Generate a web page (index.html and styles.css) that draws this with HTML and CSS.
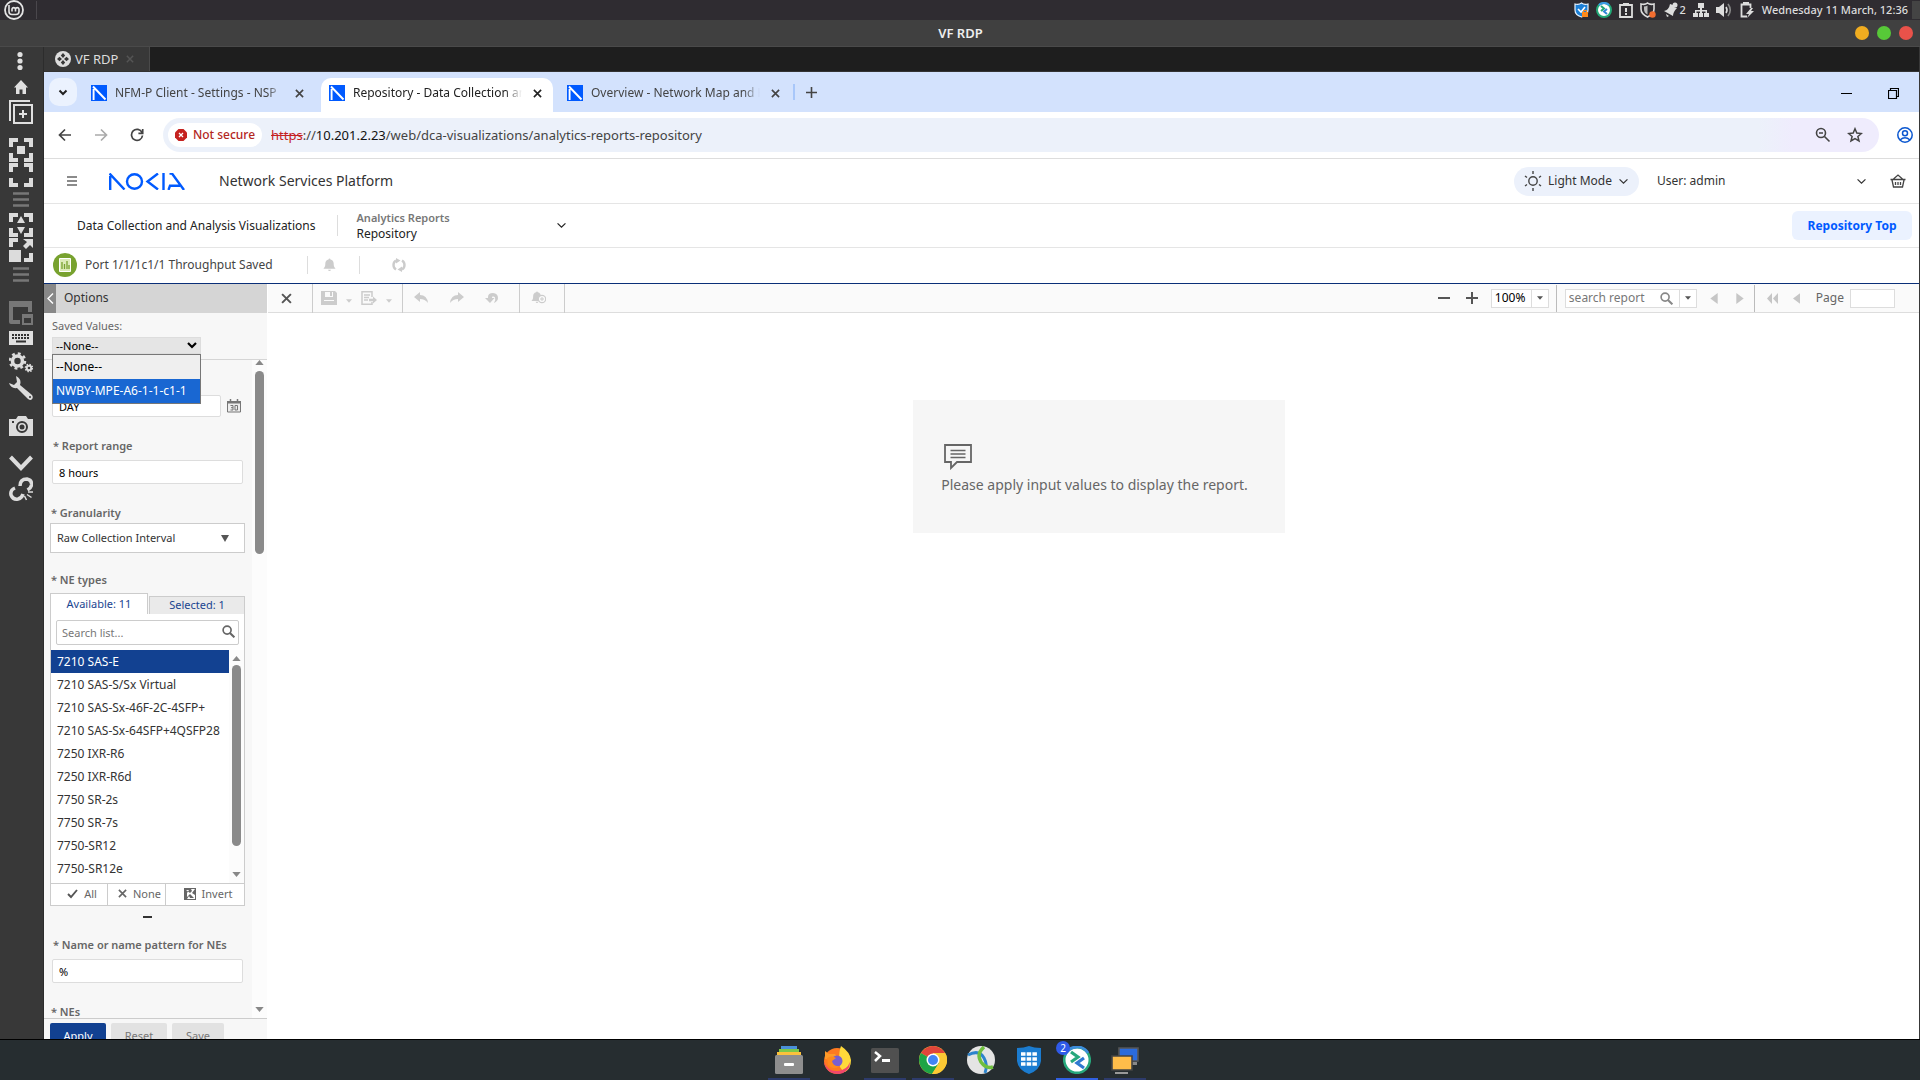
FILE: index.html
```html
<!DOCTYPE html>
<html lang="en">
<head>
<meta charset="utf-8">
<title>VF RDP</title>
<link rel="stylesheet" href="styles.css">
</head>
<body>
<svg class="defs" aria-hidden="true">
  <symbol id="i-close" viewBox="0 0 10 10"><path d="M1 1l8 8M9 1l-8 8" fill="none" stroke="currentColor" stroke-width="1.8"/></symbol>
  <symbol id="i-chev" viewBox="0 0 12 8"><path d="M1.500 1.500l4.500 4.500 4.500-4.500" fill="none" stroke="currentColor" stroke-width="1.400"/></symbol>
  <symbol id="i-tri" viewBox="0 0 10 6"><path d="M0 0h10L5 6z" fill="currentColor"/></symbol>
  <symbol id="i-left" viewBox="0 0 8 12"><path d="M8 0v12L0 6z" fill="currentColor"/></symbol>
  <symbol id="i-search" viewBox="0 0 14 14"><circle cx="5.500" cy="5.500" r="4.300" fill="none" stroke="currentColor" stroke-width="1.800"/><path d="M8.600 8.600l4.700 4.700" stroke="currentColor" stroke-width="2.200"/></symbol>
  <symbol id="i-fav" viewBox="0 0 16 16"><path d="M0 0h16v16H0z" fill="#005aff"/><path d="M2.600 15V4M2 1.500L14.500 14.500" fill="none" stroke="#fff" stroke-width="1.900"/></symbol>
  <symbol id="i-bell" viewBox="0 0 14 14"><path d="M7 0a1 1 0 0 1 1 1c2.500.5 3.500 2.300 3.500 4.500 0 3 .5 4 2 5.500H.5c1.500-1.500 2-2.500 2-5.500C2.500 3.300 3.500 1.500 6 1a1 1 0 0 1 1-1zM5.500 12h3a1.500 1.500 0 0 1-3 0z" fill="currentColor"/></symbol>
  <symbol id="i-lines" viewBox="0 0 24 24"><path d="M4 5.500h16M4 11.500h16M4 17.500h16" stroke="#777" stroke-width="2.500"/></symbol>
  <symbol id="i-corners" viewBox="0 0 24 24"><path d="M2 9V2h7M15 2h7v7M22 15v7h-7M9 22H2v-7" fill="none" stroke="#dcdcdc" stroke-width="4"/></symbol>
</svg>

<header class="panel">
  <button class="mint" aria-label="Menu"><svg width="20" height="20" viewBox="0 0 20 20"><circle cx="10" cy="10" r="9" fill="none" stroke="#e4e4e4" stroke-width="1.800"/><path d="M5 5v6.500a3 3 0 0 0 3 3h4a3 3 0 0 0 3-3V9a1.800 1.800 0 0 0-3.500 0v2.500M11.500 9A1.800 1.800 0 0 0 8 9v2.500" fill="none" stroke="#e4e4e4" stroke-width="1.600"/></svg></button>
  <div class="tray">
    <svg width="15" height="16" viewBox="0 0 15 16"><path d="M1 2q4 1 6.500-1Q10 3 14 2v6q0 5-6.500 7Q1 13 1 8z" fill="#1c7fd6" stroke="#e8f3ff" stroke-width="1.200"/><path d="M4 7l3 3 4-5" fill="none" stroke="#fff" stroke-width="1.600"/><path d="M8 10h6v5H8z" fill="#ff8a1c"/><path d="M9.500 10V8.500h3V10" fill="none" stroke="#ff8a1c"/></svg>
    <svg width="16" height="16" viewBox="0 0 16 16"><circle cx="8" cy="8" r="7" fill="#fff" stroke="#22a877" stroke-width="2"/><path d="M3 3a7 7 0 0 1 10 0" fill="none" stroke="#3c9be6" stroke-width="2"/><path d="M5 4l3 2.500L5 9" fill="none" stroke="#22a877" stroke-width="2"/><path d="M11 7L8 9.500l3 2.500" fill="none" stroke="#2f86d6" stroke-width="2"/></svg>
    <svg width="14" height="16" viewBox="0 0 14 16"><path d="M1 3h12v12H1z" fill="none" stroke="#ddd" stroke-width="1.800"/><path d="M4 1h6v3H4zM6 6h2v4H6zM6 11h2v2H6z" fill="#ddd"/></svg>
    <svg width="16" height="16" viewBox="0 0 16 16"><path d="M1 2q4 1 6.500-1Q10 3 14 2v5q0 5-6.500 8Q1 12 1 7z" fill="none" stroke="#ddd" stroke-width="1.600"/><path d="M4 4.500q2 0 3.500-1v9Q4 11 4 7z" fill="#bbb"/><circle cx="12.500" cy="12.500" r="3.200" fill="#f36d30"/></svg>
    <span class="notif"><svg width="15" height="16" viewBox="0 0 15 16"><path d="M1 9q5-1 6-7l3 1q1 3 4 3-4 4-4 8L1 9z" fill="#ddd"/><circle cx="12" cy="3" r="2.500" fill="#ddd"/><path d="M3 12l3 2-2 1z" fill="#ddd"/></svg>2</span>
    <svg width="16" height="16" viewBox="0 0 16 16"><path d="M5 1h6v5H5zM0 11h5v4H0zM6 11h4v4H6zM11 11h5v4h-5zM7 6h2v6H7zM2 8h12v1.500H2zM2 8h1.500v4H2zM12.500 8H14v4h-1.500z" fill="#ddd"/></svg>
    <svg width="16" height="16" viewBox="0 0 16 16"><path d="M0 5h3l5-4v14l-5-4H0z" fill="#ddd"/><path d="M10 5q2 3 0 6" fill="none" stroke="#ddd" stroke-width="1.600"/><path d="M12 2q4.500 6 0 12" fill="none" stroke="#888" stroke-width="1.600"/></svg>
    <svg width="16" height="16" viewBox="0 0 16 16"><path d="M8 14.500H2.500v-12h9V6" fill="none" stroke="#ddd" stroke-width="1.800"/><path d="M4 0h6v3H4zM12 6l-5 6h3l-2 4 7-7h-3l2-3z" fill="#ddd"/></svg>
    <time>Wednesday 11 March, 12:36</time>
  </div>
  <span class="corner"></span>
</header>

<div class="titlebar">
  <h1>VF RDP</h1>
  <div class="lights"><button class="min" aria-label="Minimize"></button><button class="max" aria-label="Maximize"></button><button class="cls" aria-label="Close"></button></div>
</div>

<div class="window">
  <nav class="tools" aria-label="Connection tools">
    <button aria-label="More"><svg viewBox="0 0 24 24"><g fill="#e0e0e0"><circle cx="11" cy="4.500" r="2.600"/><circle cx="11" cy="11" r="2.600"/><circle cx="11" cy="17.500" r="2.600"/></g></svg></button>
    <button aria-label="Home"><svg viewBox="0 0 24 24"><path d="M12 5l7 7.500h-2V19h-3.500v-4.500h-3V19H7v-6.500H5z" fill="#e0e0e0"/></svg></button>
    <button aria-label="New connection"><svg viewBox="0 0 24 24"><path d="M1 21V1h20M5 5h18v18H5zM14 10v8M10 14h8" fill="none" stroke="#e0e0e0" stroke-width="2"/></svg></button>
    <button class="gap" aria-label="Fit window"><svg viewBox="0 0 24 24"><use href="#i-corners"/><path d="M8 8h8v8H8z" fill="#dcdcdc"/></svg></button>
    <button aria-label="Fullscreen"><svg viewBox="0 0 24 24"><use href="#i-corners"/></svg></button>
    <button aria-label="Fullscreen options"><svg viewBox="0 0 24 24"><use href="#i-lines"/></svg></button>
    <button aria-label="Dynamic resolution"><svg viewBox="0 0 24 24"><use href="#i-corners"/><path d="M12 3l4 7H8zM12 21l4-7H8z" fill="#dcdcdc"/></svg></button>
    <button aria-label="Scaled mode"><svg viewBox="0 0 24 24"><path d="M2 9V2h7M22 15v7h-7" fill="none" stroke="#dcdcdc" stroke-width="4"/><path d="M0 12h12v12H0zM14 1h10v9l-3-3-4 4-3-3 4-4z" fill="#dcdcdc"/></svg></button>
    <button aria-label="Scale options"><svg viewBox="0 0 24 24"><use href="#i-lines"/></svg></button>
    <button class="gap" aria-label="Multi monitor"><svg viewBox="0 0 24 24"><path d="M0 0h23v11h-4V6H4v13h7v4H2q-2 0-2-2zM13 13h11v11H13zm2 4v5h7v-5z" fill="#777" fill-rule="evenodd"/></svg></button>
    <button aria-label="Grab keyboard"><svg viewBox="0 0 24 24"><path d="M0 5h24v14H0z" fill="#e0e0e0"/><path d="M3 9h18M3 12h18" stroke="#333" stroke-width="2" stroke-dasharray="2 1"/><path d="M7 15.500h10" stroke="#333" stroke-width="2"/></svg></button>
    <button aria-label="Preferences"><svg viewBox="0 0 24 24"><g fill="none" stroke="#dcdcdc"><circle cx="8.500" cy="10" r="5" stroke-width="3.600"/><circle cx="8.500" cy="10" r="7.500" stroke-width="2.500" stroke-dasharray="2.900 3"/><circle cx="20" cy="17" r="2.300" stroke-width="2"/><circle cx="20" cy="17" r="3.700" stroke-width="1.300" stroke-dasharray="1.500 1.400"/></g></svg></button>
    <button aria-label="Tools"><svg viewBox="0 0 24 24"><path d="M7 0q6 3 4 9l12 10q2 3-1 5-2 0-3-1L8 12Q2 13 0 7l5 2 3-3-1-6z" fill="#dcdcdc"/><circle cx="21" cy="21" r="1" fill="#333"/></svg></button>
    <button class="gap" aria-label="Screenshot"><svg viewBox="0 0 24 24"><path d="M0 5h7l2-3h8l2 3h5v17H0z" fill="#dcdcdc"/><circle cx="13" cy="13" r="5" fill="#dcdcdc" stroke="#383838" stroke-width="2"/><circle cx="13" cy="13" r="2.500" fill="#383838"/><path d="M3 7h2v2H3zM2 2h3v1H2z" fill="#383838"/></svg></button>
    <button class="gap" aria-label="Minimize window"><svg viewBox="0 0 24 24"><path d="M1.500 5L12 16 22.500 5" fill="none" stroke="#dcdcdc" stroke-width="4"/></svg></button>
    <button aria-label="Disconnect"><svg viewBox="0 0 24 24"><g fill="none" stroke="#dcdcdc" stroke-width="3.500"><path d="M11 9q0-7 7-7 5 1 4.500 6-.5 3-4 5"/><path d="M6 11q-5 2-4 7 2 5 7 4 4-1 5-5"/></g><path d="M15.500 19l2 4M18 17.500l4.500 3M19 15h5" stroke="#dcdcdc" stroke-width="1.500"/></svg></button>
  </nav>

  <div class="session">
    <div class="rtabs"><div class="rtab"><svg width="16" height="16" viewBox="0 0 16 16"><circle cx="8" cy="8" r="8" fill="#ddd"/><g fill="#383838"><path d="M8 2l2.200 2.500L8 7 5.800 4.500zM8 9l2.200 2.500L8 14l-2.200-2.500zM2 8l2.500-2.200L7 8l-2.500 2.200zM9 8l2.500-2.200L14 8l-2.500 2.200z"/></g></svg><span>VF RDP</span><svg class="rx" width="8" height="8"><use href="#i-close"/></svg></div></div>

    <div class="ctabs">
      <button class="tabsearch" aria-label="Search tabs"><svg width="10" height="7" viewBox="0 0 10 7"><path d="M1.500 1.500L5 5l3.500-3.500" fill="none" stroke="#222" stroke-width="2"/></svg></button>
      <div class="ctab"><svg width="16" height="16"><use href="#i-fav"/></svg><span>NFM-P Client - Settings - NSP</span><button aria-label="Close tab"><svg width="9" height="9"><use href="#i-close"/></svg></button></div>
      <div class="ctab on"><svg width="16" height="16"><use href="#i-fav"/></svg><span>Repository - Data Collection and Analysis</span><button aria-label="Close tab"><svg width="9" height="9"><use href="#i-close"/></svg></button></div>
      <div class="ctab"><svg width="16" height="16"><use href="#i-fav"/></svg><span>Overview - Network Map and Health</span><button aria-label="Close tab"><svg width="9" height="9"><use href="#i-close"/></svg></button></div>
      <button class="newtab" aria-label="New tab"><svg width="11" height="11" viewBox="0 0 11 11"><path d="M5.500 0v11M0 5.500h11" stroke="#444" stroke-width="1.600"/></svg></button>
      <div class="wctl"><svg width="11" height="11" viewBox="0 0 11 11"><path d="M0 5.500h11" stroke="#000"/></svg><svg width="11" height="11" viewBox="0 0 11 11"><path d="M.5 2.500h8v8h-8zM2.500 2.500v-2h8v8h-2" fill="none" stroke="#000" stroke-width="1.200"/></svg></div>
    </div>

    <div class="cbar">
      <button aria-label="Back"><svg width="14" height="14" viewBox="0 0 14 14"><path d="M13 7H2M7 1.500L1.500 7 7 12.500" fill="none" stroke="#444" stroke-width="1.700"/></svg></button>
      <button aria-label="Forward"><svg width="14" height="14" viewBox="0 0 14 14"><path d="M1 7h11M7 1.500L12.500 7 7 12.500" fill="none" stroke="#aaa" stroke-width="1.700"/></svg></button>
      <button aria-label="Reload"><svg width="14" height="14" viewBox="0 0 14 14"><path d="M12 4.500A5.500 5.500 0 1 0 12.500 7.500M12.700 1v4.300H8.400" fill="none" stroke="#444" stroke-width="1.700"/></svg></button>
      <div class="omni">
        <button class="chip"><svg width="12" height="12" viewBox="0 0 12 12"><path d="M3.500 0h5L12 3.500v5L8.500 12h-5L0 8.500v-5z" fill="#c5221f"/><path d="M4 4l4 4M8 4L4 8" stroke="#fff" stroke-width="1.300"/></svg>Not secure</button>
        <div class="url"><s>https</s>://<b>10.201.2.23</b>/web/dca-visualizations/analytics-reports-repository</div>
        <svg width="16" height="16" viewBox="0 0 16 16"><g fill="none" stroke="#444" stroke-width="1.600"><circle cx="6" cy="6" r="4.500"/><path d="M9.500 9.500l5 5M4 6h4"/></g></svg>
        <svg width="16" height="16" viewBox="0 0 16 16"><path d="M8 1.800l1.800 4.300 4.600.4-3.500 3 1.100 4.500L8 11.600 4 14l1.100-4.500-3.500-3 4.600-.4z" fill="none" stroke="#444" stroke-width="1.500"/></svg>
      </div>
      <button class="prof" aria-label="Profile"><svg width="16" height="16" viewBox="0 0 16 16"><g fill="none" stroke="#0b57d0" stroke-width="1.500"><circle cx="8" cy="8" r="7.200"/><circle cx="8" cy="6.300" r="2.500"/><path d="M3 13q5-4.500 10 0"/></g></svg></button>
    </div>

    <header class="nsp">
      <button aria-label="Menu" class="burger"><svg width="10" height="10" viewBox="0 0 10 10"><path d="M0 1h10M0 5h10M0 9h10" stroke="#666" stroke-width="1.400"/></svg></button>
      <svg class="logo" role="img" aria-label="Nokia" width="76" height="17" viewBox="0 0 76 17"><g fill="none" stroke="#005aff" stroke-width="2.400"><path d="M1.200 17V3M.5.5L15.500 16.500"/><ellipse cx="25.500" cy="8.500" rx="7.500" ry="7.300"/><path d="M49 .5L38.500 8.500 49 16.500M54.500 0v17M60.500.5H63L75 17M59.500 17l1.500-4.300h10"/></g></svg>
      <span class="prod">Network Services Platform</span>
      <button class="mode"><svg width="18" height="20" viewBox="0 0 18 20"><circle cx="9" cy="10" r="4.200" fill="none" stroke="#444" stroke-width="1.400"/><path d="M9 0v3M9 17v3M1 5l2 1.500M17 5l-2 1.500M1 15l2-1.500M17 15l-2-1.500" stroke="#444" stroke-width="1.400"/></svg><span>Light Mode</span><svg width="11" height="7"><use href="#i-chev"/></svg></button>
      <button class="user"><span>User: admin</span><svg width="11" height="7"><use href="#i-chev"/></svg></button>
      <button aria-label="Basket" class="basket"><svg width="16" height="16" viewBox="0 0 16 16"><path d="M.5 6.500h15M2 7l1.500 7h9L14 7M3.500 6L8 2l4.500 4M5.500 9v3M8 9v3M10.500 9v3" fill="none" stroke="#444" stroke-width="1.300"/></svg></button>
    </header>

    <div class="crumbs">
      <span class="app">Data Collection and Analysis Visualizations</span>
      <button class="view"><span><small>Analytics Reports</small>Repository</span><svg width="11" height="7"><use href="#i-chev"/></svg></button>
      <button class="top">Repository Top</button>
    </div>

    <div class="report">
      <svg width="24" height="24" viewBox="0 0 24 24"><circle cx="12" cy="12" r="12" fill="#78a22f"/><path d="M6.500 5.500h11v13h-11z" fill="#dcebb8" stroke="#fff"/><path d="M9 16V9M11.500 16v-5M14 16V8M16 16v-4" stroke="#78a22f" stroke-width="1.300"/></svg>
      <span>Port 1/1/1c1/1 Throughput Saved</span>
      <button class="rb" aria-label="Alerts"><svg width="13" height="14"><use href="#i-bell"/></svg></button>
      <button class="rf" aria-label="Refresh"><svg width="14" height="14" viewBox="0 0 14 14"><path d="M4 11.500A5.300 5.300 0 0 1 4 2.500M10 2.500a5.300 5.300 0 0 1 0 9" fill="none" stroke="#ccc" stroke-width="2.400"/><path d="M4 0l4.500 2.500L4 5.500zM10 14l-4.500-2.500L10 8.500z" fill="#ccc"/></svg></button>
    </div>

    <div class="body">
      <aside class="options">
        <div class="ohead"><button aria-label="Collapse"><svg width="7" height="11" viewBox="0 0 7 11"><path d="M6 .5l-5 5 5 5" fill="none" stroke="#fff" stroke-width="1.400"/></svg></button><h2>Options</h2></div>
        <div class="saved">
          <label for="sv">Saved Values:</label>
          <div class="pick"><select id="sv"><option>--None--</option></select><svg width="10" height="7" viewBox="0 0 10 7"><path d="M1 1l4 4 4-4" fill="none" stroke="#000" stroke-width="2.200"/></svg></div>
          <ul class="menu" role="listbox"><li role="option">--None--</li><li role="option" class="hot" aria-selected="true">NWBY-MPE-A6-1-1-c1-1</li></ul>
        </div>
        <div class="scroll">
          <form class="form">
            <div class="field in"><label for="f1">*</label><div class="date"><input id="f1" value="DAY" aria-label="Date"><svg width="14" height="14" viewBox="0 0 14 14"><path d="M.5 2.500h13v10.500H.5z" fill="#eee" stroke="#777"/><path d="M0 2h14v2.500H0z" fill="#777"/><path d="M3.500 0v3M10.500 0v3" stroke="#777" stroke-width="1.500"/><path d="M3.500 6.500h2.500v4.500H3.500M4 8.700h2M8 6.500h2.500V11H8z" fill="none" stroke="#777"/></svg></div></div>
            <div class="field in"><label for="f2">* Report range</label><input id="f2" class="tall" value="8 hours"></div>
            <div class="field"><label for="f3">* Granularity</label><div class="pick big"><select id="f3"><option>Raw Collection Interval</option></select><svg width="8" height="7" viewBox="0 0 10 6" preserveAspectRatio="none"><use href="#i-tri"/></svg></div></div>
            <div class="field multi"><label for="f4">* NE types</label>
              <div class="mtabs"><button type="button" class="on">Available: 11</button><button type="button">Selected: 1</button></div>
              <div class="mbox">
                <div class="find"><input id="f4" placeholder="Search list..."><svg width="13" height="13"><use href="#i-search"/></svg></div>
                <div class="lwrap">
                  <ul class="list" role="listbox"><li role="option" class="hot" aria-selected="true">7210 SAS-E</li><li role="option">7210 SAS-S/Sx Virtual</li><li role="option">7210 SAS-Sx-46F-2C-4SFP+</li><li role="option">7210 SAS-Sx-64SFP+4QSFP28</li><li role="option">7250 IXR-R6</li><li role="option">7250 IXR-R6d</li><li role="option">7750 SR-2s</li><li role="option">7750 SR-7s</li><li role="option">7750-SR12</li><li role="option">7750-SR12e</li></ul>
                  <div class="bar inner"><svg class="up" width="9" height="5"><use href="#i-tri"/></svg><div class="track"><i></i></div><svg width="9" height="5"><use href="#i-tri"/></svg></div>
                </div>
                <div class="acts"><button type="button"><svg width="11" height="10" viewBox="0 0 11 10"><path d="M1 5l3 3 6-7" fill="none" stroke="#555" stroke-width="1.900"/></svg>All</button><button type="button"><svg width="9" height="9"><use href="#i-close"/></svg>None</button><button type="button"><svg width="12" height="12" viewBox="0 0 12 12"><path d="M0 0h12v12H0z" fill="#666"/><path d="M2 2h3l-2 3v4l3-3 4 4H6l-1-2-2 3h8V7L8 5l3-4v-0H7l1 2-2 2z" fill="#fff"/></svg>Invert</button></div>
              </div>
              <div class="grip"></div>
            </div>
            <div class="field in"><label for="f5">* Name or name pattern for NEs</label><input id="f5" class="tall" value="%"></div>
            <div class="field"><label>* NEs</label></div>
          </form>
          <div class="bar outer"><svg class="up" width="9" height="5"><use href="#i-tri"/></svg><div class="track"><i></i></div><svg width="9" height="5"><use href="#i-tri"/></svg></div>
        </div>
        <div class="obtns"><button class="pri">Apply</button><button>Reset</button><button>Save</button></div>
      </aside>

      <main class="viewer">
        <div class="vbar">
          <div class="g g1"><button aria-label="Close"><svg width="11" height="11"><use href="#i-close"/></svg></button></div>
          <div class="g g2">
            <button aria-label="Save"><svg width="16" height="14" viewBox="0 0 16 14"><path d="M0 0h14l2 2v12H0zM4 1v5h8V1zM3 9v1h10V9z" fill="currentColor" fill-rule="evenodd"/><path d="M9 1h2v4H9z" fill="currentColor"/></svg></button><svg class="car" width="6" height="4"><use href="#i-tri"/></svg>
            <button aria-label="Export"><svg width="16" height="14" viewBox="0 0 16 14"><path d="M11 6V.8H1v12.400h10V11M3 4h6M3 6.500h5M3 9h4" fill="none" stroke="currentColor" stroke-width="1.500"/><path d="M8 7.800h4V5.500L16 9l-4 3.500v-2.300H8z" fill="currentColor"/></svg></button><svg class="car" width="6" height="4"><use href="#i-tri"/></svg>
          </div>
          <div class="g g3">
            <button aria-label="Undo"><svg width="14" height="12" viewBox="0 0 14 12"><path d="M0 5l6-5v3q7 0 8 8-3-4-8-4v3z" fill="currentColor"/></svg></button>
            <button aria-label="Redo"><svg width="14" height="12" viewBox="0 0 14 12"><path d="M14 5L8 0v3Q1 3 0 11q3-4 8-4v3z" fill="currentColor"/></svg></button>
            <button aria-label="Undo all"><svg width="14" height="12" viewBox="0 0 14 12"><path d="M3 6V5q0-4 5-4 5 .5 5 5 0 3-4 5 2-3 1-5.500Q9 4 7.500 4.500 7 5 7 6h2.500L5 11 0 6z" fill="currentColor"/></svg></button>
          </div>
          <div class="g g4"><button aria-label="Add alert"><svg width="15" height="14" viewBox="0 0 15 14"><use href="#i-bell" width="12" height="13"/><circle cx="11" cy="8" r="3.700" fill="#fafafa" stroke="currentColor" stroke-width="1.200"/><path d="M11 6v4M9 8h4" stroke="currentColor"/></svg></button></div>
          <div class="zoom">
            <button aria-label="Zoom out"><svg width="12" height="12" viewBox="0 0 12 12"><path d="M0 6h12" stroke="#555" stroke-width="2"/></svg></button>
            <button aria-label="Zoom in"><svg width="12" height="12" viewBox="0 0 12 12"><path d="M0 6h12M6 0v12" stroke="#555" stroke-width="2"/></svg></button>
            <div class="combo zc"><input value="100%" aria-label="Zoom"><button aria-label="Zoom levels"><svg width="6" height="4"><use href="#i-tri"/></svg></button></div>
          </div>
          <div class="srch">
            <div class="combo sc"><input placeholder="search report" aria-label="Search report"><svg width="13" height="13"><use href="#i-search"/></svg><button aria-label="Search options"><svg width="6" height="4"><use href="#i-tri"/></svg></button></div>
            <button aria-label="Previous match"><svg width="8" height="11"><use href="#i-left"/></svg></button>
            <button aria-label="Next match" class="flip"><svg width="8" height="11"><use href="#i-left"/></svg></button>
          </div>
          <div class="pages">
            <button aria-label="First page"><svg width="11" height="11" viewBox="0 0 11 11"><path d="M5 0v11L0 5.500zM11 0v11L6 5.500z" fill="currentColor"/></svg></button>
            <button aria-label="Previous page"><svg width="7" height="11"><use href="#i-left"/></svg></button>
            <label for="pg">Page</label><input id="pg">
          </div>
        </div>
        <div class="canvas">
          <div class="msg"><svg width="28" height="26" viewBox="0 0 28 26"><path d="M1 1h26v17H13l-6 6v-6H1z" fill="none" stroke="#666" stroke-width="1.800"/><path d="M6.500 6.500h15M6.500 10h15M6.500 13.500h15" stroke="#666" stroke-width="1.600"/></svg><p>Please apply input values to display the report.</p></div>
        </div>
      </main>
    </div>
  </div>
</div>

<footer class="dock">
  <button aria-label="Files" class="run"><svg viewBox="0 0 28 28"><path d="M6 0h16v4H6z" fill="#4a90d9"/><path d="M4 3h20v4H4z" fill="#7cc84a"/><path d="M2 6h24v5H2z" fill="#fbc13c"/><rect y="9" width="28" height="19" rx="1.500" fill="#8e8e8e"/><rect x="9" y="17" width="10" height="3" rx="1" fill="#fff"/></svg></button>
  <button aria-label="Firefox"><svg viewBox="0 0 28 28"><circle cx="14" cy="15" r="13" fill="#ff7a20"/><path d="M18 0q9 6 10 14 0 9-6 12-7-4-6-12 0-9 2-14z" fill="#ffd93a"/><path d="M1 16q4 10 14 9 9-1 12-9 0 10-11 12Q3 28 1 16z" fill="#f0476c"/><path d="M2 5l4 3h6l3 4-5 2-8-1z" fill="#ff9a28"/><circle cx="14" cy="15" r="5.500" fill="#7a5fd0"/><path d="M4 12q5-3 9 0l-4 3q1 6 8 5-7 5-12-1z" fill="#ff8a1c"/></svg></button>
  <button aria-label="Terminal" class="run"><svg viewBox="0 0 28 28"><rect y="2" width="28" height="25" rx="1.500" fill="#505050"/><path d="M4 6l5 4-5 5" fill="none" stroke="#fff" stroke-width="2.500"/><path d="M11 14.500h8" stroke="#fff" stroke-width="3"/></svg></button>
  <button aria-label="Chrome" class="run"><svg viewBox="0 0 28 28"><circle cx="14" cy="14" r="14" fill="#fcc934"/><path d="M14 14L1.900 7a14 14 0 0 1 24.200 0H14z" fill="#e0453a"/><path d="M14 14L1.900 7A14 14 0 0 0 13 28l7-11z" fill="#1ea446"/><path d="M14 7h12.100A14 14 0 0 1 13 28l7-11z" fill="#fcc934"/><circle cx="14" cy="14" r="6.500" fill="#fff"/><circle cx="14" cy="14" r="5" fill="#4285f4"/></svg></button>
  <button aria-label="Secure client"><svg viewBox="0 0 28 28"><circle cx="14" cy="14" r="14" fill="#e4e4e4"/><path d="M1 9q11-6 16 3 4 7 1 15" fill="none" stroke="#2c84cc" stroke-width="3"/><path d="M17 1q-8 7-3 15 5 7 12 5" fill="none" stroke="#6fbf3f" stroke-width="3.500"/></svg></button>
  <button aria-label="Firewall"><svg viewBox="0 0 28 28"><path d="M2 2q7 0 12-2 5 2 12 2v13q-1 9-12 13Q3 24 2 15z" fill="#1b7cd0"/><path d="M6 8h16M6 13h16M6 18h16" stroke="#fff" stroke-width="3.500" stroke-dasharray="4.500 1.200"/></svg></button>
  <button aria-label="Remmina" class="act"><svg viewBox="0 0 28 28"><circle cx="14" cy="14" r="12.800" fill="#fff" stroke="#27a87c" stroke-width="2.600"/><path d="M2 9A13 13 0 0 1 25 7" fill="none" stroke="#3c8ddb" stroke-width="2.800"/><path d="M8 6l7 5-7 5" fill="none" stroke="#27a87c" stroke-width="3.200"/><path d="M21 12l-7 5 7 5" fill="none" stroke="#2f79d0" stroke-width="3.200"/></svg><em>2</em></button>
  <button aria-label="Remote desktop" class="run"><svg viewBox="0 0 28 28"><path d="M8 2h19v13H8z" fill="#2a6bdc" stroke="#555" stroke-width="1.600"/><path d="M20 16h6v3h-6z" fill="#888"/><path d="M1 10h20v14H1z" fill="#ffbd4a" stroke="#444" stroke-width="1.600"/><path d="M4 26h13v2H4z" fill="#999"/></svg></button>
</footer>
</body>
</html>
```
FILE: styles.css
```css
* { box-sizing: border-box; }
body {
  margin: 0; height: 100vh; overflow: hidden;
  display: flex; flex-direction: column;
  font-family: "Noto Sans", "Open Sans", sans-serif; font-size: 12px; line-height: 16px; color: #333;
  background: #fff;
}
button, input, select { font: inherit; color: inherit; margin: 0; padding: 0; border: 0; background: none; border-radius: 0; outline: 0; }
button { display: flex; align-items: center; justify-content: center; }
select { appearance: none; }
h1, h2, p, ul { margin: 0; padding: 0; list-style: none; }
svg { display: block; flex: none; }
.defs { position: absolute; width: 0; height: 0; }

/* desktop panel */
.panel { flex: none; height: 20px; background: #2f2c31; display: flex; align-items: center; color: #ddd; }
.mint { width: 37px; height: 18px; padding-right: 12px; border-right: 1px solid #4a474c; justify-content: flex-end; }
.tray { margin-left: auto; display: flex; align-items: center; gap: 7px; font-size: 11px; font-weight: 500; }
.tray time { margin-right: 4px; }
.notif { display: flex; align-items: center; gap: 2px; }
.corner { width: 8px; height: 18px; background: #444; }
.titlebar { flex: none; height: 27px; background: #404040; border-bottom: 1px solid #4a4a4a; display: flex; align-items: center; color: #eee; padding: 0 7px; }
.titlebar h1 { flex: 1; text-align: center; font-size: 13px; font-weight: 600; padding-left: 59px; }
.lights { display: flex; gap: 8px; }
.lights button { width: 14px; height: 14px; border-radius: 50%; }
.min { background: #f0ad20; } .max { background: #57c938; } .cls { background: #e9524a; }

.window { flex: 1; min-height: 0; display: flex; background: #383838; border-bottom: 1px solid #000; padding-right: 1px; }
.tools { flex: none; width: 44px; padding: 2px 0 0 9px; display: flex; flex-direction: column; border-right: 1px solid #2c2c2c; }
.tools button { width: 24px; height: 25px; flex: none; }
.tools svg { width: 24px; height: 24px; }
.tools .gap { margin-top: 13px; }
.session { flex: 1; min-width: 0; display: flex; flex-direction: column; background: #fff; }

.rtabs { flex: none; height: 25px; background: #1e1e1e; border-bottom: 1px solid #333; display: flex; }
.rtab { width: 106px; background: #383838; border-right: 1px solid #4a4a4a; display: flex; align-items: center; gap: 4px; padding-left: 11px; color: #ddd; font-size: 13px; }
.rx { margin-left: 4px; color: #555; }

/* browser chrome */
.ctabs { flex: none; height: 40px; background: #d3e2fd; display: flex; align-items: flex-end; padding: 0 34px 0 5px; color: #444; }
.ctabs > * { height: 34px; padding-bottom: 4px; }
.tabsearch { width: 28px; margin-right: 6px; }
.ctabs .tabsearch { height: 28px; border-radius: 10px; background: #ebf2fe; margin-bottom: 6px; padding: 0; }
.ctab { width: 238px; padding: 0 8px 4px; display: flex; align-items: center; gap: 8px; }
.ctab span { flex: none; width: 169px; white-space: nowrap; overflow: hidden; mask-image: linear-gradient(90deg, #000 90%, transparent); }
.ctab.on { width: 232px; margin-right: 6px; background: #fff; border-radius: 10px 10px 0 0; color: #222; }
.ctab.on + .ctab { width: 234px; }
.ctab button { width: 14px; height: 20px; }
.ctabs .newtab { width: 34px; height: 16px; margin-bottom: 12px; padding: 0; border-left: 2px solid #a8c7fa; }
.wctl { margin-left: auto; display: flex; align-items: center; gap: 36px; margin-right: -14px; }
.cbar { flex: none; height: 47px; border-bottom: 1px solid #ddd; display: flex; align-items: center; padding: 0 6px 0 13px; }
.cbar > button { width: 16px; margin-right: 20px; }
.omni { flex: 1; height: 34px; border-radius: 17px; margin-left: -2px; padding: 0 16px 0 5px; display: flex; align-items: center; gap: 16px;
  background: linear-gradient(90deg, #ecf1fa 93%, #efecfd 95%); }
.chip { height: 24px; width: 94px; border-radius: 12px; background: #fff; color: #b3261e; gap: 6px; font-weight: 500; }
.url { flex: 1; font-size: 13px; margin-left: -7px; color: #444; white-space: nowrap; }
.url s { color: #c5221f; } .url b { font-weight: 400; color: #111; }
.cbar > .prof { margin: 0 0 0 18px; }

/* NSP header */
.nsp { flex: none; height: 45px; border-bottom: 1px solid #e5e5e5; display: flex; align-items: center; padding: 0 13px 0 23px; }
.burger { width: 10px; margin-right: 32px; }
.logo { margin-right: 34px; }
.prod { font-size: 14px; margin-right: auto; }
.mode { height: 29px; width: 125px; border-radius: 15px; background: #ecf1fb; gap: 6px; margin-right: 18px; }
.user { width: 210px; justify-content: space-between; margin-right: 23px; }
.crumbs { flex: none; height: 44px; border-bottom: 1px solid #e5e5e5; display: flex; align-items: center; padding: 0 7px 0 33px; color: #222; }
.view { margin-left: 22px; padding-left: 18px; width: 230px; justify-content: space-between; text-align: left; border-left: 1px solid #ddd; height: 21px; }
.view small { display: block; font-size: 11px; font-weight: 600; color: #777; }
.top { margin-left: auto; width: 120px; height: 29px; border-radius: 6px; background: #ebf2ff; color: #005aff; font-weight: 700; }
.report { flex: none; height: 36px; border-bottom: 1px solid #0a2f78; display: flex; align-items: center; padding: 0 0 2px 9px; gap: 8px; color: #444; }
.rb, .rf { color: #ccc; height: 18px; border-left: 1px solid #ddd; }
.rb { width: 44px; margin-left: 26px; }
.rf { width: 80px; }

.body { flex: 1; min-height: 0; display: flex; }
.options { flex: none; width: 223px; background: #f7f7f7; display: flex; flex-direction: column; overflow: hidden; font-size: 11px; color: #666; }
.ohead { flex: none; height: 29px; background: #d5d5d5; display: flex; align-items: center; color: #333; }
.ohead button { width: 12px; height: 29px; background: #888; }
.ohead h2 { font-size: 12px; font-weight: 400; margin-left: 8px; padding-bottom: 2px; }
.saved { flex: none; height: 47px; border-bottom: 1px solid #d5d5d5; padding: 5px 8px 0; position: relative; display: grid; grid-template-rows: 19px 17px; }
.pick { display: grid; align-items: center; }
.pick > * { grid-area: 1 / 1; }
.pick select { height: 100%; }
.pick svg { justify-self: end; pointer-events: none; margin-right: 4px; }
.saved .pick { width: 149px; }
.saved select { background: #e5e5e5; padding-left: 3px; color: #000; border: 1px solid #ddd; line-height: 15px; }
.menu { position: absolute; z-index: 2; left: 8px; top: 41px; width: 149px; border: 1px solid #777; background: #efefef; color: #000; font-size: 12px; }
.menu li { height: 24px; line-height: 24px; padding-left: 3px; white-space: nowrap; }
.menu .hot { background: #1967d2; color: #fff; }
.scroll { flex: 1; min-height: 0; display: flex; overflow: hidden; }
.form { flex: 1; padding: 11px 7px 0 6px; display: flex; flex-direction: column; gap: 17px; overflow: hidden; }
.field { flex: none; display: grid; }
.field label { height: 20px; line-height: 20px; font-weight: 600; padding-left: 1px; }
.in { padding: 0 2px 2px; }
.in label { height: 24px; }
.in input { height: 22px; background: #fff; border: 1px solid #ddd; border-radius: 2px; padding-left: 6px; color: #000; min-width: 0; }
.in .tall { height: 24px; }
.date { display: flex; gap: 6px; align-items: center; }
.date input { width: 169px; }
.big { height: 30px; }
.big select { background: #fff; border: 1px solid #ccc; padding-left: 6px; color: #333; }
.big svg { margin-right: 16px; color: #555; }
.multi label { height: 23px; }
.mtabs { display: flex; align-items: flex-end; height: 21px; color: #1a4590; }
.mtabs button { flex: 1; height: 18px; background: #eaeaea; border: 1px solid #ccc; padding-bottom: 2px; border-bottom-width: 0; }
.mtabs .on { height: 21px; background: #fff; margin-right: 1px; flex: 0 0 98px; padding: 0; }
.mbox { border: 1px solid #ccc; border-top: 0; background: #fff; }
.find { display: flex; align-items: center; height: 25px; margin: 6px 5px 5px; border: 1px solid #ccc; border-radius: 2px; padding: 0 3px 2px 5px; }
.find input { flex: 1; min-width: 0; padding-top: 2px; }
::placeholder { color: #777; opacity: 1; }
.lwrap { display: flex; height: 233px; }
.list { flex: 1; overflow: hidden; color: #333; font-size: 12px; }
.list li { height: 23px; line-height: 23px; padding-left: 6px; white-space: nowrap; }
.list .hot { background: #124191; color: #fff; }
.bar { flex: none; width: 15px; background: #fcfcfc; display: flex; flex-direction: column; align-items: center; color: #888; padding: 6px 0; gap: 4px; }
.outer { padding: 0 0 6px; }
.bar .up { transform: rotate(180deg); }
.track { flex: 1; width: 9px; }
.track i { display: block; border-radius: 5px; background: #8a8a8a; height: 89%; }
.outer .track { padding-top: 2px; }
.outer .track i { height: 29%; }
.acts { display: grid; grid-template-columns: 57px 58px 1fr; height: 22px; border-top: 1px solid #ccc; }
.acts button { gap: 6px; border-right: 1px solid #ccc; padding: 0 0 2px 6px; }
.acts button:last-child { border-right: 0; }
.grip { width: 9px; height: 2px; background: #333; justify-self: center; margin: 10px 0 0; }
.obtns { flex: none; height: 21px; border-top: 1px solid #ccc; display: flex; gap: 5px; padding: 4px 6px 0; align-items: flex-start; overflow: hidden; }
.obtns button { width: 56px; height: 26px; flex: none; background: #e2e2e2; border-radius: 2px; color: #777; }
.obtns button:last-child { width: 52px; }
.obtns .pri { background: #124191; color: #fff; }

/* report viewer */
.viewer { flex: 1; min-width: 0; display: flex; flex-direction: column; margin-left: 1px; }
.vbar { flex: none; height: 29px; background: #fafafa; border-bottom: 1px solid #ddd; display: flex; align-items: center; color: #ccc; }
.g { height: 29px; display: flex; align-items: center; border-right: 1px solid #ccc; }
.g1 { width: 45px; justify-content: center; color: #555; padding-right: 8px; }
.g2 { width: 90px; padding-left: 8px; gap: 9px; }
.g2 .car { margin: 6px 0 0 0; }
.g3 { width: 117px; padding: 0 20px 0 11px; justify-content: space-between; }
.g4 { width: 45px; padding-left: 11px; }
.zoom { margin-left: auto; display: flex; align-items: center; gap: 16px; height: 27px; padding-right: 7px; border-right: 1px solid #bbb; color: #555; }
.srch, .pages { display: flex; align-items: center; height: 27px; color: #c6c6c6; }
.srch { padding: 0 5px 0 8px; gap: 9px; border-right: 1px solid #bbb; }
.srch > button { width: 17px; }
.pages { padding: 0 24px 0 11px; gap: 10px; }
.pages button { width: 14px; }
.pages label { color: #666; margin: 0 -4px 0 2px; }
.pages input { width: 45px; height: 19px; border: 1px solid #ddd; background: #fff; }
.combo { display: flex; align-items: center; height: 19px; border: 1px solid #ddd; background: #fff; color: #555; }
.combo input { flex: 1; min-width: 0; padding-left: 3px; }
.combo button { width: 17px; height: 17px; border-left: 1px solid #ddd; }
.zc { width: 58px; color: #000; margin-left: -3px; } .zc button { color: #555; }
.sc { width: 132px; } .sc > svg { margin-right: 6px; color: #888; }
.flip svg { transform: rotate(180deg); }
.canvas { flex: 1; display: flex; justify-content: center; align-items: flex-start; padding: 87px 0 0 11px; }
.msg { background: #f6f6f6; padding: 44px 37px 38px 28px; font-size: 14px; color: #666; white-space: nowrap; }
.msg svg { margin: 0 0 5px 3px; }
.msg p { line-height: 20px; }

/* dock */
.dock { flex: none; height: 40px; background: #262d30; display: flex; justify-content: center; align-items: stretch; gap: 6px; padding-right: 6px; }
.dock button { width: 42px; border-bottom: 2px solid transparent; position: relative; padding-top: 2px; }
.dock svg { width: 28px; height: 28px; }
.dock .run { border-color: #2d3b6b; } .dock .act { border-color: #3160e0; }
.dock em { position: absolute; left: 0; top: 1px; width: 14px; height: 14px; border-radius: 50%; background: #2f5ae8; color: #fff; font-size: 10px; line-height: 14px; font-style: normal; text-align: center; }
```
